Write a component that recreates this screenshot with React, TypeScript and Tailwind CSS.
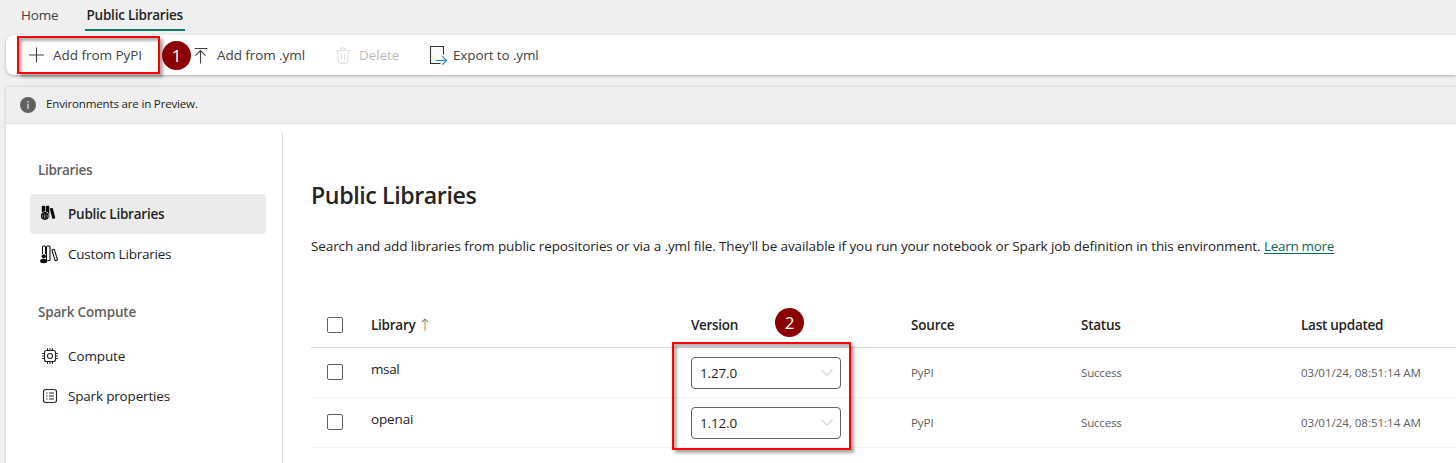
import type { ReactNode } from "react";

function PlusIcon() {
  return (
    <svg width="16" height="16" viewBox="0 0 16 16" fill="none" stroke="#424242" strokeWidth="1.1">
      <path d="M8.5 0.5v15M1 8h15" />
    </svg>
  );
}

function UploadIcon() {
  return (
    <svg width="14" height="17" viewBox="0 0 14 17" fill="none" stroke="#424242" strokeWidth="1.1">
      <path d="M0.5 1.5h13M6.5 16.5V4M1.5 8.7L6.5 3.6L11.5 8.7" />
    </svg>
  );
}

function TrashIcon() {
  return (
    <svg width="16" height="17" viewBox="0 0 16 17" fill="none" stroke="#e2e2e2" strokeWidth="1.1" strokeLinecap="round">
      <path d="M0.7 3.5h14.6M5.7 3.2a2.3 2.3 0 0 1 4.6 0M2.2 3.7l1.2 10.8a1.8 1.8 0 0 0 1.8 1.6h5.6a1.8 1.8 0 0 0 1.8-1.6L13.8 3.7M6.5 7v5.5M9.5 7v5.5" />
    </svg>
  );
}

function ExportIcon() {
  return (
    <svg width="18" height="20" viewBox="0 0 18 20" fill="none">
      <path d="M0.5 1.5h13v17h-13z" fill="#fafafa" />
      <path d="M13.500 9.500V1.500H0.500v17h10" stroke="#333" strokeWidth="1.1" />
      <path d="M6 15.500h10.500M12.300 11.200l4.200 4.300l-4.200 4.200" stroke="#1e8fd0" strokeWidth="1.2" />
    </svg>
  );
}

function InfoIcon() {
  return (
    <svg width="16" height="16" viewBox="0 0 16 16">
      <circle cx="8" cy="8" r="8" fill="#616161" />
      <path d="M7.3 4h1.4v1.5H7.3zM7.3 6.800h1.400V12H7.300z" fill="#d6d6d6" />
    </svg>
  );
}

function PublicLibIcon() {
  return (
    <svg width="20" height="20" viewBox="0 0 20 20" fill="#0a0a0a">
      <path d="M1.800 2.500c0-.5.3-.8.8-.8h1.900c.5 0 .8.3.8.8v5.500H1.800zM6 2.500c0-.5.300-.8.800-.8h1.700c.5 0 .8.300.8.800V14H8V8H6z" />
      <path d="M9.900 5.300c-.1-.5.1-.9.6-1l1.200-.4c.5-.1 1 .1 1.200.6l2.300 8.900c.1.5-.1.900-.6 1.100l-1.300.3c-.5.1-1-.1-1.100-.6z" />
      <circle cx="4.800" cy="11.900" r="4.500" fill="#ebebeb" />
      <g fill="none" stroke="#0a0a0a" strokeWidth="1.100">
        <circle cx="4.800" cy="11.900" r="3.300" />
        <ellipse cx="4.800" cy="11.900" rx="1.300" ry="3.300" />
        <path d="M1.500 10.900h6.600M1.500 13h6.600" />
      </g>
    </svg>
  );
}

function CustomLibIcon() {
  return (
    <svg width="20" height="20" viewBox="0 0 20 20" fill="none" stroke="#111" strokeWidth="1.1">
      <path d="M2.500 10V3a1 1 0 0 1 1-1h1a1 1 0 0 1 1 1v7M6.500 16.500V3a1 1 0 0 1 1-1h1.500a1 1 0 0 1 1 1v12.500a1 1 0 0 1-1 1H7.500" />
      <path d="M12.500 5.700l.9-.3a.8.8 0 0 1 1 .5l3 9.400a.8.800 0 0 1-.5 1l-.9.300a.8.800 0 0 1-1-.5l-3-9.400a.8.800 0 0 1 .5-1z" />
      <circle cx="3.700" cy="12.300" r="2.100" fill="#000" stroke="none" />
      <ellipse cx="3.700" cy="17" rx="3.600" ry="2.200" fill="#000" stroke="none" />
    </svg>
  );
}

function ChipIcon() {
  return (
    <svg width="16" height="16" viewBox="0 0 16 16" fill="none" stroke="#242424" strokeWidth="1.1" strokeLinecap="round">
      <rect x="2.500" y="2.500" width="11" height="11" rx="2" />
      <circle cx="8" cy="8" r="2.500" />
      <path d="M5.500 0.600v1.800M8 0.600v1.800M10.500 0.600v1.800M5.500 13.600v1.800M8 13.600v1.800M10.500 13.600v1.800M0.600 5.500h1.800M0.600 8h1.800M0.600 10.500h1.800M13.600 5.500h1.800M13.600 8h1.800M13.600 10.500h1.800" />
    </svg>
  );
}

function ListIcon() {
  return (
    <svg width="16" height="16" viewBox="0 0 16 16" fill="none" stroke="#242424" strokeWidth="1.1">
      <rect x="1.500" y="1.500" width="13" height="13" rx="2.200" />
      <path d="M7 5h5M7 8h5M7 11h5M4.200 5h1.300M4.200 8h1.300M4.200 11h1.300" />
    </svg>
  );
}

function ChevronIcon() {
  return (
    <svg width="12" height="7" viewBox="0 0 12 7" fill="none" stroke="#d1d1d1" strokeWidth="1.1">
      <path d="M0.500 0.600L6 6.100L11.500 0.600" />
    </svg>
  );
}

function SortIcon() {
  return (
    <svg width="8" height="13" viewBox="0 0 8 13" fill="none">
      <path d="M4 12.500V1.500" stroke="#e3ae62" strokeWidth="1.500" />
      <path d="M1 4.200L4 1.200L7 4.200" stroke="#6f9180" strokeWidth="1.200" />
    </svg>
  );
}

function Badge({ children, className }: { children: ReactNode; className: string }) {
  return (
    <span
      className={`absolute flex size-[29px] items-center justify-center rounded-full bg-[#8b0000] text-[17px] leading-none text-white ${className}`}
    >
      {children}
    </span>
  );
}

function Checkbox() {
  return <span className="block size-4 rounded-[2px] border border-[#616161] bg-white" />;
}

function NavItem({ icon, label, tracking, active }: { icon: ReactNode; label: string; tracking: string; active?: boolean }) {
  return (
    <li className={`flex h-10 items-center rounded pl-[10px] ${active ? "bg-[#ebebeb] font-semibold" : ""}`}>
      <span className="flex w-5 shrink-0 justify-center">{icon}</span>
      <span className={`ml-2 ${tracking}`}>{label}</span>
    </li>
  );
}

const columns = "grid grid-cols-[60px_320px_220px_170px_220px_1fr]";

function LibraryRow({ name, version, tracking }: { name: string; version: string; tracking: string }) {
  return (
    <div className={`${columns} h-[50px] items-center border-b border-[#f2f2f2]`}>
      <div className="pb-px pl-4">
        <Checkbox />
      </div>
      <div className={`pb-[7px] ${tracking}`}>{name}</div>
      <div>
        <div className="flex h-8 w-[150px] items-center justify-between rounded border border-[#616161] pr-[7px] pl-2 tracking-[-0.16px]">
          {version}
          <ChevronIcon />
        </div>
      </div>
      <div className="pt-px text-[11.6px] tracking-[-0.1px] text-[#616161]">PyPI</div>
      <div className="pt-px text-[11.6px] tracking-[-0.22px] text-[#616161]">Success</div>
      <div className="pt-px text-[11.6px] tracking-[-0.05px] text-[#616161]">03/01/24, 08:51:14 AM</div>
    </div>
  );
}

export default function App() {
  return (
    <div className="relative flex h-[463px] w-full flex-col overflow-hidden bg-[#efefef] font-['Open_Sans','Noto_Sans',sans-serif] text-[13.5px] leading-5 text-[#242424]">
      <nav className="flex h-[35px] shrink-0 pt-[5px] pl-[21px]">
        <span className="tracking-[-0.15px] text-[#424242]">Home</span>
        <span className="ml-[26px] h-[26px] w-[100px] border-b-2 border-[#117865] pl-[2px] font-semibold tracking-[-0.24px] whitespace-nowrap">
          Public Libraries
        </span>
      </nav>

      <div className="ml-1.5 flex h-10 shrink-0 items-center rounded-l-lg bg-white pl-[22px] text-[#424242] shadow-[0_1px_3px_rgba(0,0,0,0.28)]">
        <div className="flex w-[166px] items-center gap-2">
          <PlusIcon />
          <span className="ml-px tracking-[-0.04px]">Add from PyPI</span>
        </div>
        <div className="flex w-[141px] items-center gap-[9px]">
          <UploadIcon />
          <span className="tracking-[-0.07px]">Add from .yml</span>
        </div>
        <div className="flex w-[95px] items-center gap-2 text-[#bdbdbd]">
          <TrashIcon />
          <span className="tracking-[-0.1px]">Delete</span>
        </div>
        <div className="flex items-center gap-[5px]">
          <ExportIcon />
          <span className="tracking-[-0.13px]">Export to .yml</span>
        </div>
      </div>

      <div className="mt-3 ml-1.5 flex min-h-0 grow flex-col rounded-tl bg-white shadow-[0_0_3px_rgba(0,0,0,0.2)]">
        <div className="flex h-[37px] shrink-0 items-center gap-[10px] rounded-tl border-b border-[#e0e0e0] bg-[#efefef] pl-[14px]">
          <InfoIcon />
          <span className="-mt-[2px] text-[11.6px] tracking-[-0.2px]">Environments are in Preview.</span>
        </div>

        <div className="flex min-h-0 grow pt-2">
          <aside className="w-[277px] shrink-0 border-r border-[#dcdcdc] pt-7 pr-4 pl-6">
            <h2 className="pl-2 font-semibold tracking-[-0.33px] text-[#616161]">Libraries</h2>
            <ul className="mt-[14px]">
              <NavItem active icon={<PublicLibIcon />} label="Public Libraries" tracking="tracking-[-0.24px]" />
              <NavItem icon={<CustomLibIcon />} label="Custom Libraries" tracking="tracking-[-0.22px]" />
            </ul>
            <h2 className="mt-7 pl-2 font-semibold tracking-[-0.19px] text-[#616161]">Spark Compute</h2>
            <ul className="mt-[14px]">
              <NavItem icon={<ChipIcon />} label="Compute" tracking="tracking-[-0.12px]" />
              <NavItem icon={<ListIcon />} label="Spark properties" tracking="tracking-[-0.18px]" />
            </ul>
          </aside>

          <main className="min-w-0 grow pl-7">
            <h1 className="mt-[47px] text-[23.2px] leading-8 font-semibold tracking-[-0.42px]">Public Libraries</h1>
            <p className="mt-[25px] whitespace-nowrap">
              <span className="tracking-[-0.105px]">
                Search and add libraries from public repositories or via a .yml file. They'll be available if you run your
                notebook or Spark job definition in this environment.
              </span>{" "}
              <a className="tracking-[-0.31px] text-[#0c695a] underline underline-offset-2">Learn more</a>
            </p>

            <div className="mt-[46px]">
              <div className={`${columns} h-[46px] items-center border-b border-[#dcdcdc] font-semibold`}>
                <div className="pl-4">
                  <Checkbox />
                </div>
                <div className="flex items-center gap-[5px] tracking-[-0.24px]">
                  Library
                  <SortIcon />
                </div>
                <div className="tracking-[-0.31px]">Version</div>
                <div className="tracking-[-0.18px]">Source</div>
                <div className="tracking-[-0.24px]">Status</div>
                <div className="tracking-[-0.26px]">Last updated</div>
              </div>
              <LibraryRow name="msal" version="1.27.0" tracking="tracking-[-0.4px]" />
              <LibraryRow name="openai" version="1.12.0" tracking="tracking-[-0.15px]" />
            </div>
          </main>
        </div>
      </div>

      <div className="absolute top-9 left-[17px] h-[38px] w-[143px] border-2 border-[#ff0000] shadow-[3px_3px_3px_rgba(0,0,0,0.35),inset_3px_3px_3px_rgba(0,0,0,0.3)]" />
      <Badge className="top-[41px] left-[162px]">1</Badge>
      <div className="absolute top-[342px] left-[672px] h-[108px] w-[179px] border-2 border-[#ff0000] shadow-[3px_3px_3px_rgba(0,0,0,0.35),inset_3px_3px_3px_rgba(0,0,0,0.3)]" />
      <Badge className="top-[308px] left-[775px]">2</Badge>
    </div>
  );
}
